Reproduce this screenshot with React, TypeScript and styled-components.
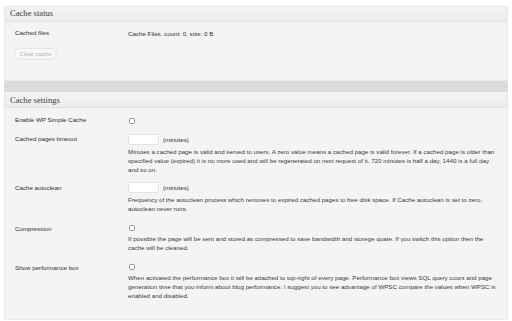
import React from "react";
import styled, { createGlobalStyle } from "styled-components";

const Global = createGlobalStyle`
  html, body { margin: 0; padding: 0; background: #ffffff; }
  body { font-family: "Liberation Sans", Arial, sans-serif; }
  * { box-sizing: border-box; }
`;

const Page = styled.div`
  width: 512px;
  height: 321px;
  padding: 5px 4px 0 4px;
  overflow: hidden;
`;

const Postbox = styled.section`
  background: #f4f4f4;
  border: 1px solid #e9e9e9;
  border-top: none;
`;

const Header = styled.h3<{ $h: number }>`
  margin: 0;
  height: ${(p) => p.$h}px;
  padding: 0 0 0 5px;
  display: flex;
  align-items: center;
  font-family: "Liberation Serif", Georgia, serif;
  font-weight: normal;
  font-size: 8.6px;
  color: #3c3c3c;
  background: linear-gradient(#f3f3f3, #ececec);
  border-bottom: 1px solid #e2e2e2;
`;

const Divider = styled.div`
  height: 11px;
  background: #dcdcdc;
`;

const Body = styled.div<{ $h: number }>`
  height: ${(p) => p.$h}px;
  padding: 0 0 0 10px;
`;

const FormTable = styled.div`
  display: grid;
  grid-template-columns: 113px 1fr;
  align-items: start;
`;

const Label = styled.div<{ $pt: number }>`
  padding-top: ${(p) => p.$pt}px;
  font-size: 6.2px;
  line-height: 9px;
  color: #2e2e2e;
`;

const Field = styled.div<{ $pt: number; $pb: number }>`
  padding-top: ${(p) => p.$pt}px;
  padding-bottom: ${(p) => p.$pb}px;
  padding-right: 10px;
  font-size: 6.2px;
  line-height: 9px;
  color: #2e2e2e;
`;

const Desc = styled.p<{ $mt: number }>`
  margin: ${(p) => p.$mt}px 0 0 0;
  font-size: 6.2px;
  line-height: 9px;
  color: #3a3a3a;
`;

const InputRow = styled.div`
  display: flex;
  align-items: center;
  gap: 4px;
  height: 11px;
`;

const TextInput = styled.span`
  display: block;
  width: 31px;
  height: 11px;
  background: #ffffff;
  border: 1px solid #e4e4e4;
  border-radius: 2px;
`;

const Check = styled.span`
  display: block;
  width: 6px;
  height: 6px;
  margin-left: 1px;
  background: #ffffff;
  border: 1px solid #8f8f8f;
  border-radius: 1.5px;
`;

const ClearButton = styled.button`
  margin: 10px 0 0 -1px;
  height: 12px;
  width: 43px;
  padding: 0;
  border: 1px solid #e6e6e6;
  border-radius: 6px;
  background: #f7f7f7;
  color: #b9b9b9;
  font-family: "Liberation Sans", Arial, sans-serif;
  font-size: 6px;
  line-height: 10px;
`;

export default function App() {
  return (
    <Page>
      <Global />
      <Postbox>
        <Header $h={17}>Cache status</Header>
        <Body $h={58}>
          <FormTable>
            <Label $pt={6}>Cached files</Label>
            <Field $pt={7} $pb={0}>Cache Files, count: 0, size: 0 B</Field>
          </FormTable>
          <ClearButton>Clear cache</ClearButton>
        </Body>
      </Postbox>
      <Divider />
      <Postbox>
        <Header $h={16}>Cache settings</Header>
        <Body $h={211}>
          <FormTable>
            <Label $pt={7}>Enable WP Simple Cache</Label>
            <Field $pt={10} $pb={10}>
              <Check />
            </Field>

            <Label $pt={-1}>Cached pages timeout</Label>
            <Field $pt={0} $pb={8}>
              <InputRow>
                <TextInput />
                <span>(minutes)</span>
              </InputRow>
              <Desc $mt={2}>
                Minutes a cached page is valid and served to users. A zero value means a cached page is valid forever. If a cached page is older than specified value (expired) it is no more used and will be regenerated on next request of it. 720 minutes is half a day, 1440 is a full day and so on.
              </Desc>
            </Field>

            <Label $pt={1}>Cache autoclean</Label>
            <Field $pt={0} $pb={10}>
              <InputRow>
                <TextInput />
                <span>(minutes)</span>
              </InputRow>
              <Desc $mt={2}>
                Frequency of the autoclean process which removes to expired cached pages to free disk space. If Cache autoclean is set to zero, autoclean never runs.
              </Desc>
            </Field>

            <Label $pt={1}>Compression</Label>
            <Field $pt={2} $pb={10}>
              <Check />
              <Desc $mt={3}>
                If possible the page will be sent and stored as compressed to save bandwidth and storege quate. If you switch this option then the cache will be cleaned.
              </Desc>
            </Field>

            <Label $pt={1}>Show performance box</Label>
            <Field $pt={2} $pb={0}>
              <Check />
              <Desc $mt={3}>
                When activated the performance box it will be attached to top-right of every page. Performance box views SQL query count and page generation time that you inform about blog performance. I suggest you to see advantage of WPSC compare the values when WPSC is enabled and disabled.
              </Desc>
            </Field>
          </FormTable>
        </Body>
      </Postbox>
    </Page>
  );
}
